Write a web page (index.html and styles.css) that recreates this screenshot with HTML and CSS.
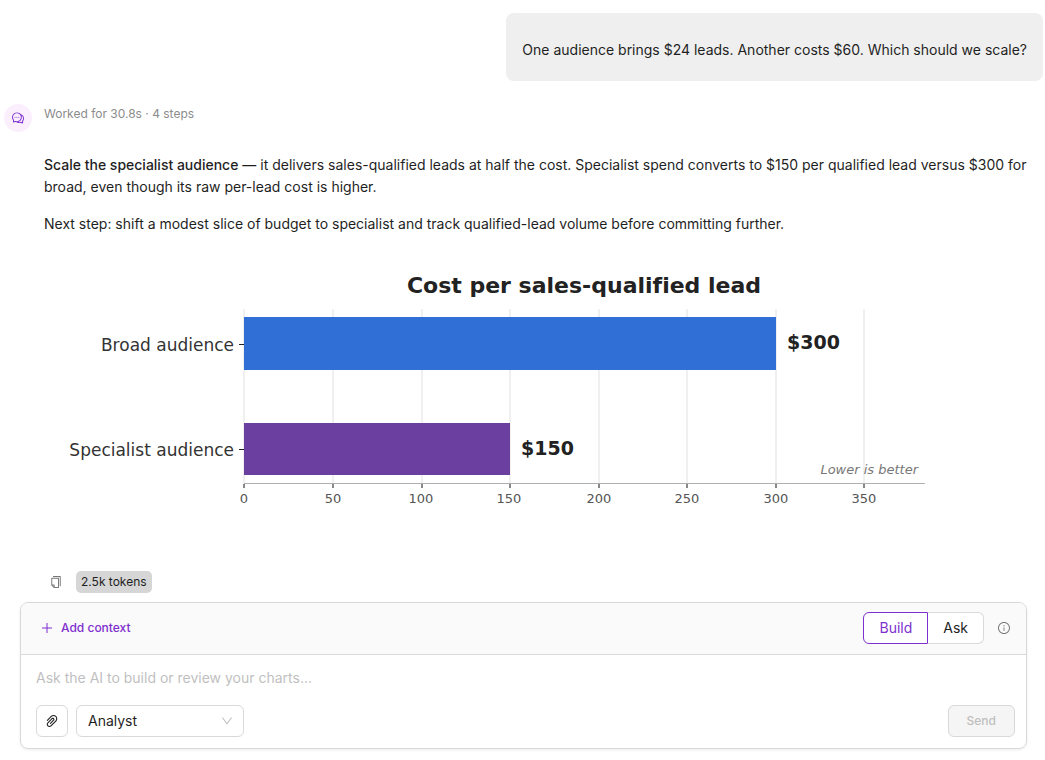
FILE: index.html
```html
<!DOCTYPE html>
<html lang="en">
<head>
<meta charset="utf-8">
<meta name="viewport" content="width=device-width, initial-scale=1">
<title>Chart assistant</title>
<link rel="stylesheet" href="styles.css">
</head>
<body>
<main class="chat">
  <div class="bubble">One audience brings $24 leads. Another costs $60. Which should we scale?</div>

  <article class="reply">
    <div class="avatar">
      <svg class="icon icon-md" viewBox="64 64 896 896" aria-hidden="true"><path d="M573 421c-23.1 0-41 17.9-41 40s17.9 40 41 40c21.1 0 39-17.9 39-40s-17.9-40-39-40zm-280 0c-23.1 0-41 17.9-41 40s17.9 40 41 40c21.1 0 39-17.9 39-40s-17.9-40-39-40z"/><path d="M894 345a343.92 343.92 0 00-189-130v.1c-17.1-19-36.4-36.5-58-52.1-163.7-119-393.5-82.7-513 81-96.3 133-92.2 311.9 6 439l.8 132.6c0 3.2.5 6.4 1.5 9.4a31.95 31.95 0 0040.1 20.9L309 806c33.5 11.9 68.1 18.7 102.5 20.6l-.5.4c89.1 64.9 205.9 84.4 313 49l127.1 41.4c3.2 1 6.5 1.6 9.9 1.6 17.7 0 32-14.3 32-32V753c88.1-119.6 90.4-284.9 1-408zM323 735l-12-5-99 31-1-104-8-9c-84.6-103.2-90.2-251.9-11-361 96.4-132.2 281.2-161.4 413-66 132.2 96.1 161.5 280.6 66 412-80.1 109.9-223.5 150.5-348 102zm505-17l-8 10 1 104-98-33-12 5c-56 20.8-115.7 22.5-171 7l-.2-.1A367.31 367.31 0 00729 676c76.4-105.3 88.8-237.6 44.4-350.4l.6.4c23 16.5 44.1 37.1 62 62 72.6 99.6 68.5 235.2-8 330z"/><path d="M433 421c-23.1 0-41 17.9-41 40s17.9 40 41 40c21.1 0 39-17.9 39-40s-17.9-40-39-40z"/></svg>
    </div>
    <div class="reply-body">
      <p class="status">Worked for 30.8s · 4 steps</p>
      <div class="answer">
        <p><strong>Scale the specialist audience</strong> — it delivers sales-qualified leads at half the cost. Specialist spend converts to $150 per qualified lead versus $300 for broad, even though its raw per-lead cost is higher.</p>
        <p>Next step: shift a modest slice of budget to specialist and track qualified-lead volume before committing further.</p>
      </div>
      <svg class="chart" viewBox="0 0 892 256" role="img" aria-label="Cost per sales-qualified lead">
        <path class="grid" d="M200 47V221M289 47V221M378 47V221M466 47V221M555 47V221M643 47V221M732 47V221M820 47V221"/>
        <rect class="bar-broad" x="200" y="55" width="532" height="53"/>
        <rect class="bar-specialist" x="200" y="161" width="266" height="52"/>
        <path class="axis" d="M200 221.500H881"/>
        <path class="tick" d="M200 222v4M289 222v4M378 222v4M466 222v4M555 222v4M643 222v4M732 222v4M820 222v4"/>
        <path class="tick-y" d="M195 82.500h5M195 187.500h5"/>
        <text class="chart-title" x="540" y="31">Cost per sales-qualified lead</text>
        <text class="category" x="190" y="89">Broad audience</text>
        <text class="category" x="190" y="194">Specialist audience</text>
        <text class="value" x="743" y="87">$300</text>
        <text class="value" x="477" y="193">$150</text>
        <text class="note" x="874" y="212">Lower is better</text>
        <g class="scale">
          <text x="200" y="241">0</text><text x="289" y="241">50</text><text x="377" y="241">100</text><text x="465" y="241">150</text><text x="555" y="241">200</text><text x="643" y="241">250</text><text x="732" y="241">300</text><text x="820" y="241">350</text>
        </g>
      </svg>
      <div class="meta">
        <button class="icon-button" type="button" aria-label="Copy">
          <svg class="icon icon-md" viewBox="64 64 896 896" aria-hidden="true"><path d="M832 64H296c-4.400 0-8 3.600-8 8v56c0 4.400 3.600 8 8 8h496v688c0 4.400 3.600 8 8 8h56c4.400 0 8-3.600 8-8V96c0-17.700-14.300-32-32-32zM704 192H192c-17.700 0-32 14.300-32 32v530.700c0 8.500 3.400 16.600 9.400 22.600l173.300 173.300c2.200 2.200 4.700 4 7.400 5.500v1.900h4.200c3.500 1.300 7.200 2 11 2H704c17.700 0 32-14.300 32-32V224c0-17.700-14.300-32-32-32zM350 856.200L263.900 770H350v86.200zM664 888H414V746c0-22.100-17.900-40-40-40H232V264h432v624z"/></svg>
        </button>
        <span class="tokens">2.5k tokens</span>
      </div>
    </div>
  </article>

  <form class="composer">
    <div class="composer-head">
      <button class="add-context" type="button">
        <svg class="icon icon-md" viewBox="0 0 12 12" aria-hidden="true"><path d="M5.500 1h1v4.500H11v1H6.500V11h-1V6.500H1v-1h4.500z"/></svg>
        Add context
      </button>
      <div class="mode" role="radiogroup" aria-label="Mode">
        <label class="mode-item"><input type="radio" name="mode" checked><span>Build</span></label>
        <label class="mode-item"><input type="radio" name="mode"><span>Ask</span></label>
      </div>
      <button class="icon-button" type="button" aria-label="Mode information">
        <svg class="icon icon-md" viewBox="64 64 896 896" aria-hidden="true"><path d="M512 64C264.600 64 64 264.600 64 512s200.600 448 448 448 448-200.600 448-448S759.400 64 512 64zm0 820c-205.400 0-372-166.600-372-372s166.600-372 372-372 372 166.600 372 372-166.600 372-372 372z"/><path d="M464 336a48 48 0 1096 0 48 48 0 10-96 0zm72 112h-48c-4.400 0-8 3.600-8 8v272c0 4.400 3.600 8 8 8h48c4.400 0 8-3.600 8-8V456c0-4.400-3.600-8-8-8z"/></svg>
      </button>
    </div>
    <div class="composer-body">
      <textarea class="prompt" rows="1" aria-label="Message" placeholder="Ask the AI to build or review your charts..."></textarea>
      <div class="tools">
        <button class="attach" type="button" aria-label="Attach file">
          <svg class="icon icon-lg" viewBox="64 64 896 896" aria-hidden="true"><path d="M779.300 196.600c-94.200-94.200-247.600-94.200-341.700 0l-261 260.800c-1.700 1.700-2.600 4-2.600 6.400s.9 4.700 2.600 6.400l36.900 36.900a9 9 0 0012.700 0l261-260.800c32.400-32.400 75.500-50.200 121.300-50.200s88.900 17.800 121.200 50.200c32.400 32.400 50.200 75.500 50.200 121.200 0 45.800-17.800 88.800-50.200 121.200l-266 265.900-43.100 43.100c-40.300 40.300-105.800 40.300-146.100 0-19.500-19.500-30.200-45.400-30.200-73s10.700-53.500 30.200-73l263.900-263.800c6.700-6.600 15.500-10.300 24.900-10.300h.1c9.400 0 18.100 3.700 24.700 10.300 6.700 6.700 10.300 15.500 10.300 24.900 0 9.300-3.700 18.100-10.300 24.700L372.400 653c-1.700 1.700-2.600 4-2.600 6.400s.9 4.700 2.600 6.400l36.900 36.900a9 9 0 0012.700 0l215.600-215.600c19.900-19.900 30.800-46.300 30.800-74.400s-11-54.600-30.800-74.400c-41.100-41.100-107.900-41-149 0L463 364 224.800 602.100A172.220 172.220 0 00174 724.800c0 46.300 18.100 89.800 50.800 122.500 33.900 33.800 78.300 50.700 122.700 50.700 44.400 0 88.800-16.900 122.600-50.700l309.200-309C824.800 492.700 850 432 850 367.500c.1-64.600-25.100-125.300-70.700-170.900z"/></svg>
        </button>
        <div class="role">
          <select aria-label="Role"><option>Analyst</option></select>
          <svg class="icon icon-md" viewBox="64 64 896 896" aria-hidden="true"><path d="M884 256h-75c-5.100 0-9.900 2.500-12.900 6.600L512 654.200 227.900 262.600c-3-4.100-7.800-6.600-12.900-6.600h-75c-6.500 0-10.300 7.400-6.500 12.700l352.600 486.100c12.800 17.600 39 17.600 51.700 0l352.600-486.100c3.900-5.300.1-12.700-6.400-12.700z"/></svg>
        </div>
        <button class="send" type="submit" disabled>Send</button>
      </div>
    </div>
  </form>
</main>
</body>
</html>
```
FILE: styles.css
```css
:root {
  --text: #1f1f1f;
  --muted: #8c8c8c;
  --line: #d9d9d9;
  --purple: #7e2fcf;
}

* {
  box-sizing: border-box;
}

body {
  margin: 0;
  background: #fff;
  color: var(--text);
  font: 14px/22px Inter, "Liberation Sans", sans-serif;
}

p {
  margin: 0;
}

button,
select,
textarea {
  margin: 0;
  font: inherit;
  color: inherit;
}

button {
  display: flex;
  align-items: center;
  justify-content: center;
  padding: 0;
  border: 0;
  background: none;
}

.icon {
  display: block;
  flex: none;
  fill: currentColor;
}

.icon-md {
  width: 12px;
  height: 12px;
}

.icon-lg {
  width: 14px;
  height: 14px;
}

.chat {
  display: flex;
  flex-direction: column;
  padding: 13px 2px 11px 4px;
}

.bubble {
  align-self: flex-end;
  padding: 26px 16px 20px;
  border-radius: 8px;
  background: #efefef;
}

.reply {
  display: flex;
  gap: 12px;
  margin-top: 23px;
}

.avatar {
  display: flex;
  flex: none;
  align-items: center;
  justify-content: center;
  width: 28px;
  height: 28px;
  border-radius: 50%;
  background: #fbeffe;
  color: var(--purple);
}

.reply-body {
  flex: 1;
  min-width: 0;
}

.status {
  color: var(--muted);
  font-size: 12px;
  line-height: 20px;
}

.answer {
  display: grid;
  gap: 15px;
  margin-top: 30px;
}

.answer strong {
  font-weight: 500;
}

.chart {
  display: block;
  width: 100%;
  max-width: 892px;
  margin-top: 27px;
  font-family: "DejaVu Sans", sans-serif;
  font-variant-ligatures: none;
}

.grid {
  stroke: #f0f0f0;
  stroke-width: 2;
}

.bar-broad {
  fill: #2f6fd6;
}

.bar-specialist {
  fill: #6b3fa0;
}

.axis {
  stroke: #b0b0b0;
}

.tick {
  stroke: #888;
  stroke-width: 2;
}

.tick-y {
  stroke: #222;
}

.chart-title {
  fill: #222;
  font-size: 22px;
  font-weight: 700;
  text-anchor: middle;
}

.category {
  fill: #333;
  font-size: 17px;
  text-anchor: end;
}

.value {
  fill: #222;
  font-size: 19px;
  font-weight: 700;
}

.note {
  fill: #777;
  font-size: 13px;
  font-style: italic;
  text-anchor: end;
}

.scale {
  fill: #555;
  font-size: 13px;
  text-anchor: middle;
}

.meta {
  display: flex;
  align-items: center;
  gap: 8px;
  margin-top: 53px;
}

.icon-button {
  width: 24px;
  height: 22px;
  color: #777;
}

.tokens {
  padding: 0 5px;
  border-radius: 5px;
  background: #d6d6d6;
  font-size: 12px;
}

.composer {
  margin: 9px 16px 0;
  border: 1px solid var(--line);
  border-radius: 8px;
  box-shadow: 0 1px 3px rgb(0 0 0 / 8%);
}

.composer-head {
  display: flex;
  align-items: center;
  padding: 9px 10px 10px 20px;
  border-bottom: 1px solid var(--line);
  border-radius: 7px 7px 0 0;
  background: #fafafa;
}

.add-context {
  gap: 8px;
  color: var(--purple);
  font-size: 12px;
  font-weight: 500;
}

.mode {
  display: flex;
  margin: 0 8px 0 auto;
}

.mode-item {
  position: relative;
}

.mode-item input {
  position: absolute;
  inset: 0;
  margin: 0;
  opacity: 0;
}

.mode-item span {
  display: block;
  padding: 4px 15px;
  border: 1px solid var(--line);
  background: #fff;
}

.mode-item:first-child span {
  border-radius: 6px 0 0 6px;
}

.mode-item:last-child span {
  border-left: 0;
  border-radius: 0 6px 6px 0;
}

.mode-item input:checked + span {
  border-color: var(--purple);
  color: var(--purple);
}

.composer-body {
  padding: 12px 11px 11px 15px;
}

.prompt {
  display: block;
  width: 100%;
  height: 22px;
  padding: 0;
  border: 0;
  outline: 0;
  background: none;
  resize: none;
}

.prompt::placeholder {
  color: #bfbfbf;
}

.tools {
  display: flex;
  gap: 8px;
  margin-top: 16px;
}

.attach,
.role select,
.send {
  height: 32px;
  border: 1px solid var(--line);
  border-radius: 6px;
}

.attach {
  width: 32px;
}

.role {
  display: grid;
  align-items: center;
  width: 168px;
}

.role > * {
  grid-area: 1 / 1;
}

.role select {
  width: 100%;
  padding: 0 11px;
  appearance: none;
  background: #fff;
}

.role .icon {
  justify-self: end;
  margin-right: 11px;
  color: #bfbfbf;
  pointer-events: none;
}

.send {
  margin-left: auto;
  padding: 0 18px;
  background: #f5f5f5;
  color: #bfbfbf;
  font-size: 12px;
  font-weight: 500;
}
```
